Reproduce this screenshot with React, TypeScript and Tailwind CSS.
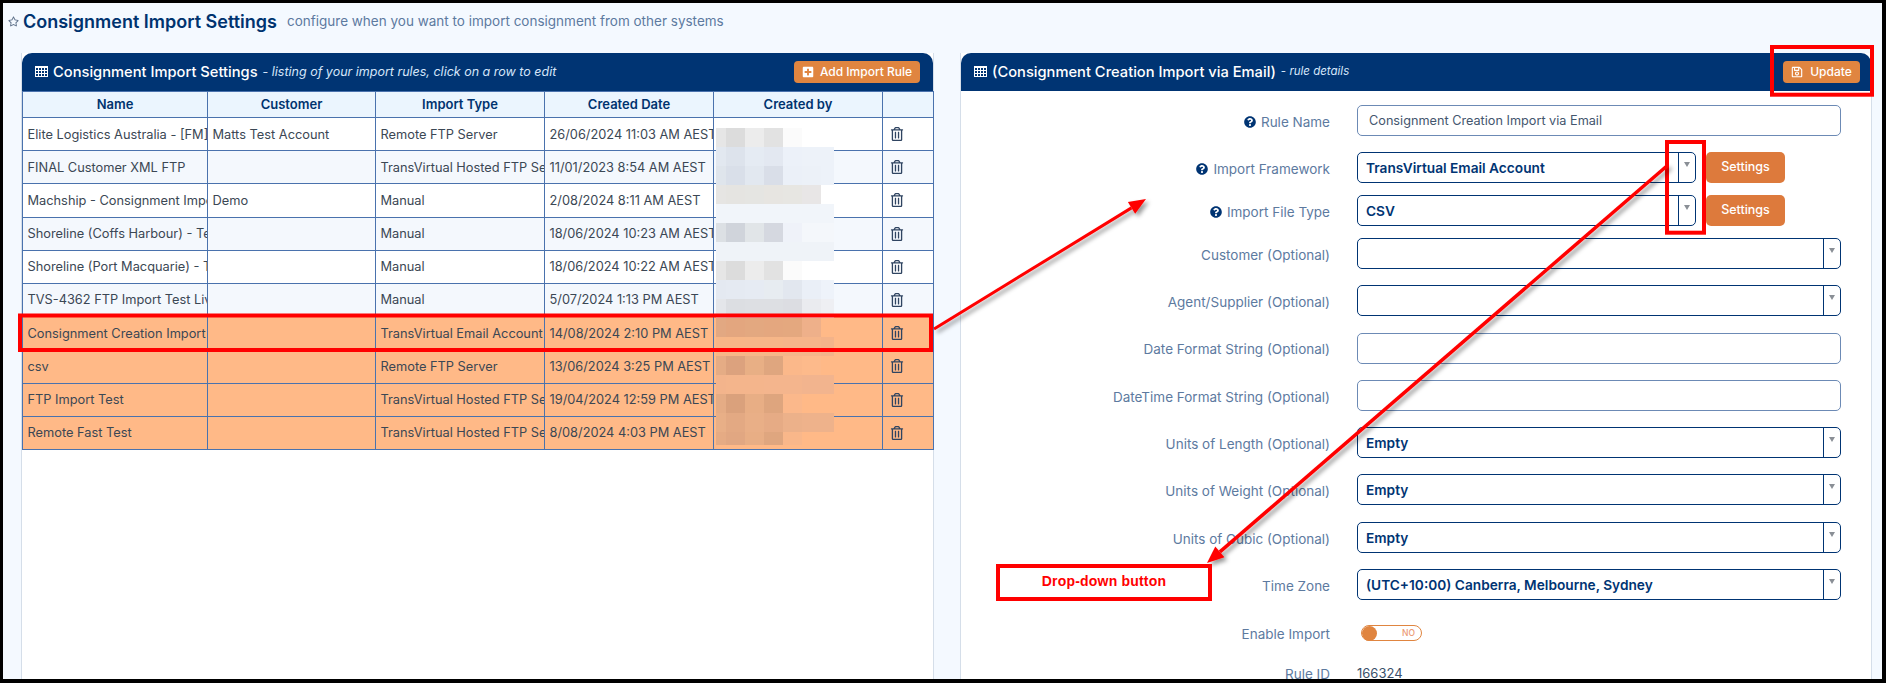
import React from "react";
import {
  FaPlusSquare,
  FaQuestionCircle,
  FaRegSave,
  FaRegStar,
  FaRegTrashAlt,
} from "react-icons/fa";

const RULES = [
  ["Elite Logistics Australia - [FM] Test", "Matts Test Account", "Remote FTP Server", "26/06/2024 11:03 AM AEST"],
  ["FINAL Customer XML FTP", "", "TransVirtual Hosted FTP Server", "11/01/2023 8:54 AM AEST"],
  ["Machship - Consignment Import", "Demo", "Manual", "2/08/2024 8:11 AM AEST"],
  ["Shoreline (Coffs Harbour) - Test", "", "Manual", "18/06/2024 10:23 AM AEST"],
  ["Shoreline (Port Macquarie) - Test", "", "Manual", "18/06/2024 10:22 AM AEST"],
  ["TVS-4362 FTP Import Test Live", "", "Manual", "5/07/2024 1:13 PM AEST"],
  ["Consignment Creation Import via Email", "", "TransVirtual Email Account", "14/08/2024 2:10 PM AEST"],
  ["csv", "", "Remote FTP Server", "13/06/2024 3:25 PM AEST"],
  ["FTP Import Test", "", "TransVirtual Hosted FTP Server", "19/04/2024 12:59 PM AEST"],
  ["Remote Fast Test", "", "TransVirtual Hosted FTP Server", "8/08/2024 4:03 PM AEST"],
];

// pixelated "Created by" names, one row of colours per block row
const MOSAIC = [
  ["#e6e6e6", "#dcdcdc", "#ececec", "#e2e2e2", "#fbfbfb", "", ""],
  ["#e2e8f0", "#dde3ec", "#e5ebf3", "#e3e8f1", "#ecf1f9", "#edf2f9", "#edf2f9"],
  ["#dfe5ec", "#d9dfe9", "#e2e8f0", "#d9dee8", "#ebf0f8", "#ecf1f8", "#edf2f9"],
  ["#e6e5e3", "#e5e4e1", "#e5e5e2", "#e7e5e1", "#e7e6e2", "#e8e6e6", ""],
  ["#f1f5fa", "#f1f5fa", "#f1f5fa", "#f1f5fa", "#f1f5fa", "#f1f5fa", "#f1f5fa"],
  ["#dce0e4", "#d0d4db", "#e1e5e8", "#d5d8e0", "#eff2f9", "#f4f7fb", "#f4f7fb"],
  ["#eff3f8", "#eff3f8", "#eff3f8", "#eff3f8", "#eff3f8", "#eff3f8", "#eff3f8"],
  ["#e6e6e6", "#dcdcdc", "#ececec", "#e2e2e2", "#fbfbfb", "", ""],
  ["#e4e9f1", "#e5eaf2", "#e6ebf3", "#e7ecf1", "#e2e7ef", "#eaeff7", "#eef3fa"],
  ["#e4e6ea", "#dcdee2", "#dddfe3", "#dddfe3", "#dcdde2", "#eaebef", "#eeeff3"],
  ["#e2a882", "#e3a67f", "#e3a880", "#e4a77f", "#e4a87f", "#eeb08a", ""],
  ["#f7b687", "#f7b687", "#f6b688", "#f6b688", "#f5b58a", "#f5b58a", "#f3b38a"],
  ["#e5ac85", "#dca27e", "#e8af85", "#dfa67f", "#fbb88a", "#fdba8b", ""],
  ["#f3b48c", "#f4b58c", "#f4b58c", "#f4b58d", "#f4b58d", "#f2b48e", "#f2b48e"],
  ["#e5ac85", "#daa17c", "#e8ae85", "#dea57e", "#fbb88b", "", ""],
  ["#e8af87", "#e3a983", "#e9af87", "#e6ab85", "#ecb18a", "#eeb28b", "#eeb28b"],
  ["#e5ab84", "#e1a782", "#e8ae85", "#dfa67f", "#f9b78a", "", ""],
];

const OPTIONAL_SELECTS = ["Empty", "Empty", "Empty", "(UTC+10:00) Canberra, Melbourne, Sydney"];

// thin four-column table glyph used in both panel headers
function TableIcon() {
  return (
    <svg width="13" height="11" viewBox="0 0 13 11" className="mr-[5px] shrink-0" fill="none" stroke="currentColor" strokeWidth="1">
      <path d="M0 1H13" strokeWidth="2" />
      <path d="M0 4.5H13M0 7.5H13M0 10.5H13M0.5 1V11M3.5 1V11M6.5 1V11M9.5 1V11M12.5 1V11" />
    </svg>
  );
}

function PanelHeader({ title, note, noteSize, children }: { title: string; note: string; noteSize: string; children: React.ReactNode }) {
  return (
    <div className="flex h-[38px] shrink-0 items-center justify-between rounded-t-[10px] bg-[#003473] pl-[13px] text-white">
      <div className="flex items-center whitespace-nowrap">
        <TableIcon />
        <span className="text-[14.7px] font-medium">{title}</span>
        <span className={`ml-[5px] text-[#d5e6fa] ${noteSize}`}>
          - <i>{note}</i>
        </span>
      </div>
      {children}
    </div>
  );
}

function Caret() {
  return <div className="h-0 w-0 border-x-[3.5px] border-t-[5px] border-x-transparent border-t-[#8a8f96]" />;
}

function Select({ value, className }: { value: string; className: string }) {
  return (
    <div className={`flex h-[31px] items-stretch rounded-[5px] border border-[#003473] bg-white ${className}`}>
      <div className="flex-1 truncate pl-[8px] text-[13.7px] leading-[31px] font-semibold text-[#003473]">{value}</div>
      <div className="flex w-[17px] items-start justify-center border-l border-[#003473] pt-[9px]">
        <Caret />
      </div>
    </div>
  );
}

function Row({ label, help, className, children }: { label: string; help?: boolean; className: string; children: React.ReactNode }) {
  return (
    <div className={`flex items-center gap-[27px] ${className}`}>
      <div className="flex w-[369px] items-center justify-end gap-[5px] pt-[3px] text-[13.5px] whitespace-nowrap text-[#5d7a9f]">
        {help && <FaQuestionCircle className="text-[12px] text-[#003473]" />}
        {label}
      </div>
      {children}
    </div>
  );
}

function Arrow({ x1, y1, x2, y2, width }: { x1: number; y1: number; x2: number; y2: number; width: number }) {
  const angle = Math.atan2(y2 - y1, x2 - x1);
  const len = 17;
  const half = 7;
  const bx = x2 - Math.cos(angle) * len;
  const by = y2 - Math.sin(angle) * len;
  const nx = -Math.sin(angle) * half;
  const ny = Math.cos(angle) * half;
  return (
    <g filter="url(#arrow-shadow)">
      <line x1={x1} y1={y1} x2={bx} y2={by} stroke="#ff0000" strokeWidth={width} />
      <polygon points={`${x2},${y2} ${bx + nx},${by + ny} ${bx - nx},${by - ny}`} fill="#ff0000" />
    </g>
  );
}

export default function App() {
  return (
    <div className="relative h-[683px] w-[1886px] overflow-hidden font-['Inter',sans-serif]">
      <div className="flex h-full flex-col overflow-hidden border-t-[3px] border-r-[4px] border-b-[4px] border-l-[3px] border-black bg-[#f4f9ff]">
        {/* Page title */}
        <div className="flex h-[50px] shrink-0 items-start pt-[3px] pl-[5px] whitespace-nowrap">
          <div className="flex h-[30px] items-center">
            <FaRegStar className="mr-[4px] text-[11px] text-[#5c6f88]" />
            <span className="text-[18px] font-semibold text-[#00336f]">Consignment Import Settings</span>
            <span className="ml-[10px] text-[13.5px] text-[#5d7a9f]">configure when you want to import consignment from other systems</span>
          </div>
        </div>

        <div className="flex min-h-0 flex-1 gap-[26px] pl-[18px]">
          {/* Rule list */}
          <div className="flex w-[913px] flex-col border-x border-[#d5dee9] bg-white">
            <PanelHeader title="Consignment Import Settings" note="listing of your import rules, click on a row to edit" noteSize="text-[12.5px]">
              <button className="mr-[13px] flex h-[22px] w-[126px] items-center justify-center gap-[6px] rounded-[4px] bg-[#e08540] text-[12px] font-medium text-white">
                <FaPlusSquare className="text-[12px]" />
                Add Import Rule
              </button>
            </PanelHeader>
            <table className="w-[911px] table-fixed border-collapse text-[12.8px] text-[#3b4754]">
              <colgroup>
                <col className="w-[185px]" />
                <col className="w-[168px]" />
                <col className="w-[169px]" />
                <col className="w-[169px]" />
                <col className="w-[169px]" />
                <col className="w-[51px]" />
              </colgroup>
              <thead>
                <tr className="h-[26px] bg-[#ebf5fe] text-[13px] font-semibold text-[#00336f]">
                  {["Name", "Customer", "Import Type", "Created Date", "Created by", ""].map((h, i) => (
                    <th key={i} className="border border-[#4a72ad] p-0 text-center font-semibold">
                      {h}
                    </th>
                  ))}
                </tr>
              </thead>
              <tbody>
                {RULES.map((rule, i) => (
                  <tr key={i} className={`h-[33.2px] ${i >= 6 ? "bg-[#ffb987]" : i % 2 ? "bg-[#f4f8fd]" : "bg-white"}`}>
                    {rule.map((cell, j) => (
                      <td key={j} className="overflow-hidden border border-[#4a72ad] px-[4.5px] py-0 whitespace-nowrap">
                        {cell}
                      </td>
                    ))}
                    <td className="border border-[#4a72ad]" />
                    <td className="border border-[#4a72ad] pl-[7px]">
                      <FaRegTrashAlt className="text-[14px] text-[#2f4461]" />
                    </td>
                  </tr>
                ))}
              </tbody>
            </table>
          </div>

          {/* Rule details */}
          <div className="flex w-[912px] flex-col border-x border-[#d5dee9] bg-white">
            <PanelHeader title="(Consignment Creation Import via Email)" note="rule details" noteSize="text-[11.5px]">
              <button className="mr-[11px] flex h-[22px] w-[77px] items-center justify-center gap-[7px] rounded-[4px] bg-[#e08540] text-[12px] font-medium text-white">
                <FaRegSave className="text-[12px]" />
                Update
              </button>
            </PanelHeader>
            <div className="pt-[14px]">
              <Row label="Rule Name" help className="mb-[16px]">
                <div className="h-[31px] w-[484px] rounded-[5px] border border-[#6c8ab5] pl-[11px] text-[12.7px] leading-[29px] text-[#44566e]">
                  Consignment Creation Import via Email
                </div>
              </Row>
              <Row label="Import Framework" help className="mb-[12px]">
                <div className="flex gap-[10px]">
                  <Select value="TransVirtual Email Account" className="w-[339px]" />
                  <button className="h-[31px] w-[79px] rounded-[5px] bg-[#dd7a3c] text-[12.5px] font-medium text-white">Settings</button>
                </div>
              </Row>
              <Row label="Import File Type" help className="mb-[12px]">
                <div className="flex gap-[10px]">
                  <Select value="CSV" className="w-[339px]" />
                  <button className="h-[31px] w-[79px] rounded-[5px] bg-[#dd7a3c] text-[12.5px] font-medium text-white">Settings</button>
                </div>
              </Row>
              <Row label="Customer (Optional)" className="mb-[16.3px]">
                <Select value="" className="w-[484px]" />
              </Row>
              <Row label="Agent/Supplier (Optional)" className="mb-[16.3px]">
                <Select value="" className="w-[484px]" />
              </Row>
              <Row label="Date Format String (Optional)" className="mb-[16.3px]">
                <div className="h-[31px] w-[484px] rounded-[5px] border border-[#6c8ab5]" />
              </Row>
              <Row label="DateTime Format String (Optional)" className="mb-[16.3px]">
                <div className="h-[31px] w-[484px] rounded-[5px] border border-[#6c8ab5]" />
              </Row>
              {["Units of Length (Optional)", "Units of Weight (Optional)", "Units of Cubic (Optional)", "Time Zone"].map((label, i) => (
                <Row key={label} label={label} className={i === 3 ? "mb-[24px]" : "mb-[16.3px]"}>
                  <Select value={OPTIONAL_SELECTS[i]} className="w-[484px]" />
                </Row>
              ))}
              <Row label="Enable Import" className="mb-[22px] h-[18px]">
                <div className="ml-[4px] flex h-[16px] w-[61px] items-center justify-between rounded-full border border-[#e08540] pr-[6px]">
                  <div className="h-[15px] w-[15px] rounded-full bg-[#e08540]" />
                  <span className="text-[8.5px] font-medium text-[#ec9a74]">NO</span>
                </div>
              </Row>
              <Row label="Rule ID" className="h-[18px]">
                <span className="pt-[2px] text-[13px] text-[#3b4f6b]">166324</span>
              </Row>
            </div>
          </div>
        </div>
      </div>

      {/* Mosaic redaction over the "Created by" column */}
      <div className="absolute top-[128px] left-[716px] grid h-[317px] grid-cols-[10px_19px_19px_19px_19px_19px_13px] overflow-hidden">
        {MOSAIC.flatMap((row, r) =>
          row.map((c, i) => <div key={`${r}-${i}`} className="h-[19px]" style={{ backgroundColor: c || "transparent" }} />)
        )}
      </div>

      {/* Annotations drawn on top of the screenshot */}
      <svg className="pointer-events-none absolute top-0 left-0" width="1886" height="683" viewBox="0 0 1886 683" fill="none">
        <defs>
          <filter id="arrow-shadow" x="-20%" y="-20%" width="140%" height="140%">
            <feDropShadow dx="3" dy="3" stdDeviation="2" floodColor="#000000" floodOpacity="0.4" />
          </filter>
        </defs>
        <rect x="20" y="315.5" width="911" height="34.5" stroke="#ff0000" strokeWidth="4" />
        <rect x="1772" y="47" width="100" height="47.7" stroke="#ff0000" strokeWidth="4" />
        <rect x="1667" y="142" width="37" height="90.7" stroke="#ff0000" strokeWidth="4" />
        <Arrow x1={934} y1={329} x2={1146} y2={199} width={3} />
        <Arrow x1={1668} y1={165} x2={1207} y2={563} width={3.5} />
      </svg>
      <div className="absolute top-[568px] left-[1000px] h-[29px] w-[208px] bg-white text-center font-['Liberation_Sans',sans-serif] text-[14px] leading-[27px] font-bold tracking-[0.2px] text-[#ff0000] outline-4 outline-[#ff0000]">
        Drop-down button
      </div>
    </div>
  );
}
